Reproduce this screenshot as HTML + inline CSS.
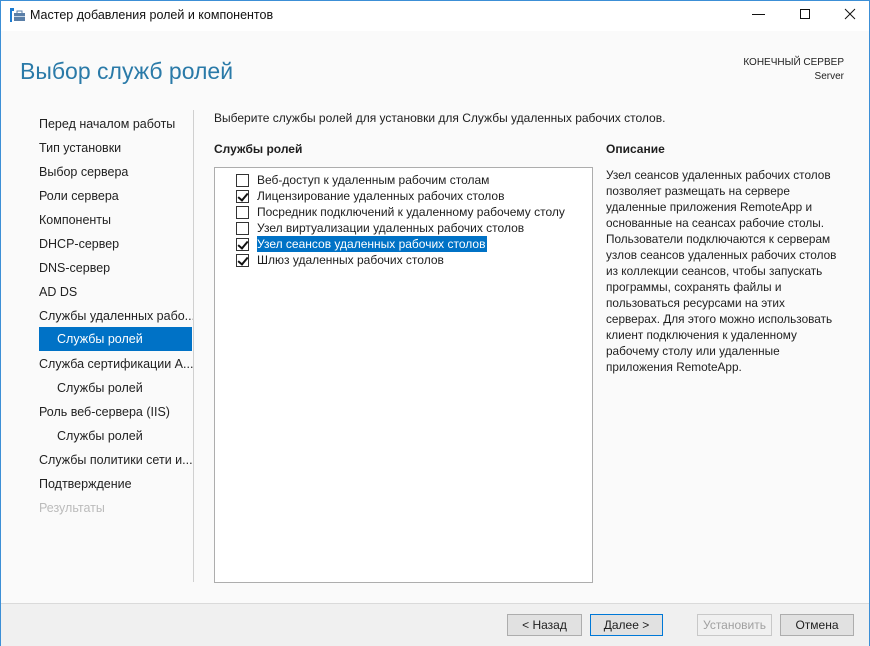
<!DOCTYPE html>
<html><head><meta charset="utf-8"><style>
*{margin:0;padding:0;box-sizing:border-box}
body{width:870px;height:646px;overflow:hidden;background:#fafafa;font-family:"Liberation Sans",sans-serif;font-size:12px;color:#1e1e1e;position:relative}
.a{position:absolute;white-space:nowrap}
#tb{left:0;top:0;width:870px;height:31px;background:#fff;border:1px solid #3c8fd6;border-bottom:none}
#win{left:0;top:0;width:870px;height:646px;border-left:1px solid #3c8fd6;border-right:1px solid #3c8fd6;pointer-events:none}
.nav{left:39px;font-size:12.5px;color:#222;height:24px;line-height:24px}
.sub{padding-left:18px}
.cb{position:absolute;left:236px;width:13px;height:13px;border:1px solid #333;background:#fff}
.cb.c::after{content:"";position:absolute;left:3px;top:0px;width:4px;height:8px;border:solid #111;border-width:0 2px 2px 0;transform:rotate(40deg)}
.it{left:257px;font-size:12px;line-height:16px}
.btn{top:614px;height:22px;border:1px solid #adadad;background:#e1e1e1;font-size:12px;text-align:center;line-height:20px}
</style></head><body>
<div class="a" id="tb"></div>
<svg class="a" style="left:10px;top:7px" width="16" height="16" viewBox="0 0 16 16"><rect x="0" y="1" width="4" height="3" fill="#1c7bd0"/><rect x="0" y="4" width="2" height="11" fill="#1c7bd0"/><rect x="4" y="6" width="11" height="8" fill="#5a7fa8"/><rect x="7" y="4" width="5" height="3" fill="none" stroke="#5a7fa8"/><rect x="4" y="9" width="11" height="1" fill="#c7d6e6"/></svg>
<div class="a" style="left:30px;top:8px;font-size:12.5px;color:#111">Мастер добавления ролей и компонентов</div>
<div class="a" style="left:752px;top:14px;width:13px;height:1px;background:#111"></div>
<div class="a" style="left:800px;top:9px;width:10px;height:10px;border:1px solid #111"></div>
<svg class="a" style="left:844px;top:8px" width="12" height="12"><path d="M1 1L11 11M11 1L1 11" stroke="#111" stroke-width="1"/></svg>
<div class="a" style="left:20px;top:58px;font-size:23px;color:#2a7aa8;font-weight:300">Выбор служб ролей</div>
<div class="a" style="right:26px;top:56px;font-size:10px;text-align:right;line-height:14px">КОНЕЧНЫЙ СЕРВЕР<br>Server</div>

<div class="a nav" style="top:112px">Перед началом работы</div>
<div class="a nav" style="top:136px">Тип установки</div>
<div class="a nav" style="top:160px">Выбор сервера</div>
<div class="a nav" style="top:184px">Роли сервера</div>
<div class="a nav" style="top:208px">Компоненты</div>
<div class="a nav" style="top:232px">DHCP-сервер</div>
<div class="a nav" style="top:256px">DNS-сервер</div>
<div class="a nav" style="top:280px">AD DS</div>
<div class="a nav" style="top:304px">Службы удаленных рабо...</div>
<div class="a nav sub" style="top:327px;width:153px;background:#0072c6;color:#fff">Службы ролей</div>
<div class="a nav" style="top:352px">Служба сертификации A...</div>
<div class="a nav sub" style="top:376px">Службы ролей</div>
<div class="a nav" style="top:400px">Роль веб-сервера (IIS)</div>
<div class="a nav sub" style="top:424px">Службы ролей</div>
<div class="a nav" style="top:448px">Службы политики сети и...</div>
<div class="a nav" style="top:472px">Подтверждение</div>
<div class="a nav" style="top:496px;color:#bbb">Результаты</div>
<div class="a" style="left:193px;top:110px;width:1px;height:472px;background:#d0d0d0"></div>

<div class="a" style="left:214px;top:111px;font-size:12px">Выберите службы ролей для установки для Службы удаленных рабочих столов.</div>
<div class="a" style="left:214px;top:142px;font-size:12px;font-weight:bold">Службы ролей</div>
<div class="a" style="left:214px;top:167px;width:379px;height:416px;background:#fff;border:1px solid #adadad"></div>
<div class="cb" style="top:174px"></div><div class="a it" style="top:172px">Веб-доступ к удаленным рабочим столам</div>
<div class="cb c" style="top:190px"></div><div class="a it" style="top:188px">Лицензирование удаленных рабочих столов</div>
<div class="cb" style="top:206px"></div><div class="a it" style="top:204px">Посредник подключений к удаленному рабочему столу</div>
<div class="cb" style="top:222px"></div><div class="a it" style="top:220px">Узел виртуализации удаленных рабочих столов</div>
<div class="cb c" style="top:238px"></div><div class="a it" style="top:236px;background:#0072c6;color:#fff;padding-right:2px">Узел сеансов удаленных рабочих столов</div>
<div class="cb c" style="top:254px"></div><div class="a it" style="top:252px">Шлюз удаленных рабочих столов</div>

<div class="a" style="left:606px;top:142px;font-size:12px;font-weight:bold">Описание</div>
<div class="a" style="left:606px;top:167px;font-size:11.8px;line-height:16px">Узел сеансов удаленных рабочих столов<br>позволяет размещать на сервере<br>удаленные приложения RemoteApp и<br>основанные на сеансах рабочие столы.<br>Пользователи подключаются к серверам<br>узлов сеансов удаленных рабочих столов<br>из коллекции сеансов, чтобы запускать<br>программы, сохранять файлы и<br>пользоваться ресурсами на этих<br>серверах. Для этого можно использовать<br>клиент подключения к удаленному<br>рабочему столу или удаленные<br>приложения RemoteApp.</div>

<div class="a" style="left:0;top:603px;width:870px;height:43px;background:#f0f0f0;border-top:1px solid #dadada"></div>
<div class="a btn" style="left:507px;width:75px">&lt; Назад</div>
<div class="a btn" style="left:590px;width:73px;border-color:#0078d7">Далее &gt;</div>
<div class="a btn" style="left:697px;width:75px;color:#a0a0a0;background:#f0f0f0;border-color:#c8c8c8">Установить</div>
<div class="a btn" style="left:780px;width:74px">Отмена</div>
<div class="a" id="win"></div>
</body></html>
